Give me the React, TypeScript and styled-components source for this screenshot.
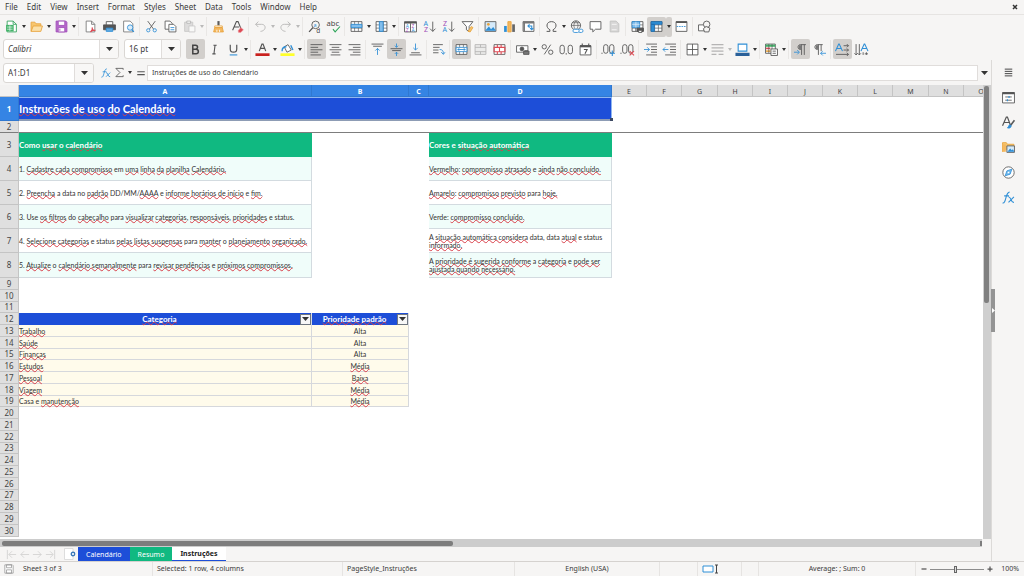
import React from "react";
import styled, { createGlobalStyle, css } from "styled-components";

const Global = createGlobalStyle`
  * { box-sizing: border-box; }
  html, body, #root { height: 100%; }
  body { margin: 0; background: #f6f5f4; color: #3b3b3b; font: 8px/12px "Noto Sans", "Open Sans", sans-serif; overflow: hidden; }
  button, input { font: inherit; color: inherit; margin: 0; padding: 0; border: 0; background: none; border-radius: 0; outline: 0; }
`;

/* ---------- shell ---------- */

const Shell = styled.div`
  display: flex;
  flex-direction: column;
  height: 100%;
  min-height: 320px;
`;

const MenuBar = styled.nav`
  display: flex;
  flex: none;
  height: 15px;
  padding-right: 6px;
  border-bottom: 1px solid #e6e4e2;
`;

const MenuButton = styled.button`
  padding: 0 4px 0 5px;
  line-height: 14px;
  white-space: nowrap;
`;

const CloseButton = styled.button`
  margin-left: auto;
  width: 6px;
  display: grid;
  place-items: center;
`;

const ToolBar = styled.div<{ $tall?: boolean }>`
  display: flex;
  flex: none;
  align-items: center;
  height: ${(p) => (p.$tall ? 23 : 22)}px;
  padding-left: ${(p) => (p.$tall ? 2 : 3)}px;
  overflow: hidden;
`;

const pressed = css`
  background: #d2cfcc;
  border-radius: 2px;
`;

const Tool = styled.button<{ $on?: boolean; $dim?: boolean }>`
  display: grid;
  place-items: center;
  flex: none;
  width: 19px;
  height: 20px;
  ${(p) => p.$on && pressed}
  svg { opacity: ${(p) => (p.$dim ? 0.4 : 1)}; }
`;

const DropButton = styled.button<{ $on?: boolean; $dim?: boolean }>`
  display: grid;
  place-items: center;
  flex: none;
  width: 6px;
  height: 20px;
  ${(p) => p.$on && pressed}
  svg { opacity: ${(p) => (p.$dim ? 0.3 : 1)}; }
`;

const Divider = styled.span`
  flex: none;
  width: 1px;
  height: 19px;
  margin: 0 2px 0 1px;
  background: #e9e7e5;
`;

const Combo = styled.div<{ $width: number }>`
  display: flex;
  flex: none;
  width: ${(p) => p.$width}px;
  height: 20px;
  margin-right: 5px;
  border: 1px solid #dad7d4;
  border-radius: 3px;
  background: #fff;
  overflow: hidden;
`;

const ComboInput = styled.input<{ $italic?: boolean }>`
  flex: 1;
  min-width: 0;
  padding-left: 4px;
  font-style: ${(p) => (p.$italic ? "italic" : "normal")};
`;

const ComboButton = styled.button`
  display: grid;
  place-items: center;
  width: 19px;
  border-left: 1px solid #e0dddb;
  background: #f8f7f6;
`;

const Main = styled.div`
  display: flex;
  flex: 1;
  min-height: 0;
`;

const Work = styled.main`
  display: flex;
  flex-direction: column;
  flex: 1;
  min-width: 0;
`;

const FormulaBar = styled.div`
  display: flex;
  flex: none;
  align-items: center;
  height: 25px;
  padding-left: 3px;
`;

const SmallTool = styled.button<{ $width: number }>`
  display: grid;
  place-items: center;
  flex: none;
  width: ${(p) => p.$width}px;
  height: 18px;
`;

const FormulaInput = styled.input`
  flex: 1;
  min-width: 0;
  height: 16px;
  padding-left: 4px;
  border: 1px solid #e0dddb;
  background: #fff;
  font-size: 7px;
`;

/* ---------- sheet ---------- */

const SheetArea = styled.div`
  display: flex;
  flex: 1;
  min-height: 0;
`;

const SheetView = styled.div`
  flex: 1;
  min-width: 0;
  overflow: hidden;
  background: #fff;
`;

const Grid = styled.table`
  table-layout: fixed;
  width: 999px;
  border-collapse: separate;
  border-spacing: 0;
  font-size: 7px;
  line-height: 8px;
`;

const Col = styled.col<{ $width: number }>`
  width: ${(p) => p.$width}px;
`;

const Head = styled.th<{ $on?: boolean }>`
  height: ${(p) => (p.scope === "col" ? "12px" : "auto")};
  padding: ${(p) => (p.scope === "col" ? "2px 0 0" : "0")};
  font-size: ${(p) => (p.scope === "col" ? 7 : 8)}px;
  font-weight: ${(p) => (p.$on ? 700 : 400)};
  text-align: center;
  color: ${(p) => (p.$on ? "#fff" : "#444")};
  background: ${(p) => (p.$on ? "#3584e4" : "#dfdfdf")};
  border: 0 solid ${(p) => (p.$on ? "#3078d0" : "#c4c4c4")};
  border-width: 0 1px 1px 0;
`;

const Corner = styled.td`
  background: #f3f2f1;
  border-right: 1px solid #c4c4c4;
  border-bottom: 1px solid #c4c4c4;
`;

const Row = styled.tr<{ $height: number; $frozen?: boolean }>`
  height: ${(p) => p.$height}px;
  ${(p) => p.$frozen && css`
    & > * { border-bottom: 1px solid #7d7d7d; }
  `}
`;

type Kind = "blank" | "title" | "section" | "mint" | "plain" | "listHead" | "list";

const kinds = {
  blank: css``,
  title: css`
    position: relative;
    background: #1d4ed8;
    color: #fff;
    font-size: 11px;
    font-weight: 700;
    border: 1px solid #8fb6f0;
    border-left: 0;
    border-bottom: 2px solid #8d9cb5;
    &::after {
      content: "";
      position: absolute;
      right: -2px;
      bottom: -2px;
      width: 3px;
      height: 3px;
      background: #3d4a63;
    }
  `,
  section: css`
    background: #10b981;
    color: #fff;
    font-size: 8px;
    font-weight: 700;
  `,
  mint: css`
    background: #f0fdfa;
    border-right: 1px solid #d3dbe0;
    border-bottom: 1px solid #d3dbe0;
  `,
  plain: css`
    border-right: 1px solid #d3dbe0;
    border-bottom: 1px solid #d3dbe0;
  `,
  listHead: css`
    background: #1d4ed8;
    color: #fff;
    font-size: 8px;
    font-weight: 700;
    border-right: 1px solid #d9dce2;
  `,
  list: css`
    background: #fffbeb;
    border-right: 1px solid #d6d8dc;
    border-bottom: 1px solid #d6d8dc;
  `,
};

const Cell = styled.td<{ $kind: Kind; $center?: boolean }>`
  padding: 0;
  text-align: ${(p) => (p.$center ? "center" : "left")};
  vertical-align: middle;
  white-space: ${(p) => (p.$kind === "mint" || p.$kind === "plain" ? "normal" : "nowrap")};
  color: #333;
  font-family: Lato, Carlito, sans-serif;
  ${(p) => kinds[p.$kind]}
`;

const Misspelt = styled.span`
  text-decoration: underline wavy #d8404a 1px;
  text-underline-offset: -1px;
  text-decoration-skip-ink: none;
`;

const HeadCellInner = styled.div`
  display: flex;
  align-items: center;
  justify-content: space-between;
  span:first-child { flex: 1; }
`;

const FilterButton = styled.button`
  display: grid;
  place-items: center;
  width: 11px;
  height: 11px;
  border: 1px solid #6f7680;
  background: #f7f7f7;
`;

const VScroll = styled.div`
  flex: none;
  width: 8px;
  padding: 1px 2px 0 1px;
  background: #cfcfcf;
`;

const VThumb = styled.div`
  height: 48%;
  border-radius: 2px;
  background: #808080;
`;

const HScroll = styled.div`
  display: flex;
  justify-content: space-between;
  flex: none;
  height: 8px;
  margin-right: 9px;
  padding: 2px 0 1px 2px;
  background: #cccccc;
`;

const HThumb = styled.div`
  width: 46%;
  border-radius: 2px;
  background: #7d7d7d;
`;

const HEnd = styled.div`
  width: 2px;
  background: #7d7d7d;
`;

/* ---------- sheet tabs ---------- */

const TabBar = styled.div`
  display: flex;
  flex: none;
  align-items: stretch;
  height: 14px;
  padding: 0 0 0 5px;
`;

const TabNav = styled.button`
  display: grid;
  place-items: center;
  width: 13px;
`;

const NavFade = styled.span`
  opacity: 0.25;
`;

const AddSheet = styled.button`
  display: grid;
  place-items: center;
  width: 14px;
  margin: 0 1px 0 6px;
`;

const SheetTab = styled.button<{ $color: string; $active?: boolean }>`
  padding: 0 8px;
  line-height: 13px;
  font-size: 7px;
  color: ${(p) => (p.$active ? "#222" : "#fff")};
  font-weight: ${(p) => (p.$active ? 700 : 400)};
  background: ${(p) => (p.$active ? "#fff" : p.$color)};
  border-bottom: ${(p) => (p.$active ? `1px solid ${p.$color}` : "0")};
`;

/* ---------- sidebar ---------- */

const SideBar = styled.aside`
  position: relative;
  display: flex;
  flex-direction: column;
  align-items: center;
  flex: none;
  width: 33px;
  border-left: 1px solid #dcdad8;
`;

const SideButton = styled.button`
  display: grid;
  place-items: center;
  flex: none;
  width: 25px;
  height: 25px;
`;

const Splitter = styled.button`
  position: absolute;
  left: -1px;
  top: 229px;
  display: grid;
  place-items: center;
  width: 4px;
  height: 43px;
  background: #949494;
`;

/* ---------- status bar ---------- */

const StatusBar = styled.footer`
  display: grid;
  grid-template-columns: 19px 133fr 190fr 172fr 145fr 38fr 44fr 17fr 157fr 109px;
  flex: none;
  height: 15px;
  border-top: 1px solid #d5d2cf;
  font-size: 7px;
`;

const StatusCell = styled.div<{ $center?: boolean; $line?: boolean }>`
  display: flex;
  align-items: center;
  justify-content: ${(p) => (p.$center ? "center" : "flex-start")};
  padding-left: ${(p) => (p.$center ? 0 : 4)}px;
  border-left: ${(p) => (p.$line === false ? "0" : "1px solid #e6e4e2")};
  white-space: nowrap;
`;

const ZoomButton = styled.button`
  display: grid;
  place-items: center;
  width: 8px;
  height: 12px;
`;

const ZoomSlider = styled.input`
  appearance: none;
  width: 54px;
  height: 10px;
  margin: 0 2px;
  background: linear-gradient(#8c8c8c, #8c8c8c) center / 100% 1px no-repeat;
  &::-webkit-slider-thumb {
    appearance: none;
    width: 3px;
    height: 7px;
    border: 1px solid #666;
    background: #ddd;
  }
`;

const ZoomValue = styled.span`
  margin-left: auto;
  padding-right: 5px;
`;

/* ---------- icons ---------- */

const Svg = styled.svg<{ $size: number }>`
  display: block;
  width: ${(p) => p.$size}px;
  height: ${(p) => p.$size}px;
  fill: none;
  stroke: #555;
  stroke-width: 1.6;
  overflow: visible;
  text { stroke: none; fill: #4a4a4a; font-family: "Noto Sans", sans-serif; }
`;

const Icon = ({ size = 13, children }: { size?: number; children: React.ReactNode }) => (
  <Svg viewBox="0 0 24 24" $size={size} aria-hidden="true">{children}</Svg>
);

const Caret = ({ wide }: { wide?: boolean }) => (
  <svg width={wide ? 7 : 4} height={wide ? 4 : 3} viewBox="0 0 8 5" preserveAspectRatio="none" aria-hidden="true">
    <path d="M0 0h8L4 5z" fill="#333" />
  </svg>
);

const BLUE = "#2f8fd6";
const FILL_BLUE = "#83beec";
const GREY = "#5a5a5a";
const ORANGE = "#e8a33d";
const RED = "#dd4b55";
const PURPLE = "#a150b8";

const tableGrid = <><path d="M2 3h20v18H2z" fill="#fff" /><path d="M2 9h20M2 15h20M8.500 3v18M15.500 3v18" strokeWidth="1.200" /></>;
const lines = (rows: [number, number, number][]) => rows.map(([y, a, b]) => <path key={y} d={`M${a} ${y}H${b}`} />);

const art: Record<string, React.ReactNode> = {
  new: <><path d="M4 2h11l6 6v14H4z" fill="#fff" stroke="#33a15b" /><path d="M15 2v6h6" stroke="#33a15b" /><path d="M2 9h14v12H2z" fill="#43b36a" stroke="none" /><path d="M4 13h10M4 17h10M9 10v10" stroke="#fff" strokeWidth="1.200" /></>,
  open: <><path d="M2 21V4h7l2 3h9v4" fill="#f7c66f" stroke={ORANGE} /><path d="M2 21 6 11h17l-3 10z" fill="#fbe0a9" stroke={ORANGE} /></>,
  save: <><path d="M2 2h18l2 2v18H2z" fill="#b668cb" stroke={PURPLE} /><path d="M6 2h12v8H6z" fill="#fff" stroke={PURPLE} /><path d="M6 14h12v8H6z" fill="#fff" stroke={PURPLE} /><path d="M9 16v4" stroke={PURPLE} /></>,
  pdf: <><path d="M4 2h10l6 6v14H4z" fill="#fff" stroke="#777" /><path d="M14 2v6h6" stroke="#777" /><path d="M12 22c3-3 4-6 3-8 0 4 3 6 6 5-4 0-7 1-9 3z" stroke={RED} fill={RED} strokeWidth="2" /></>,
  print: <><path d="M6 9V3h12v6" fill="#fff" /><path d="M1 9h22v9H1z" fill="#555" /><path d="M6 15h12v6H6z" fill="#5fa8df" stroke={BLUE} /></>,
  preview: <><path d="M3 2h12l5 5v15H3z" fill="#fff" stroke="#777" /><circle cx="15" cy="14" r="5" fill="#d9ecfa" stroke={BLUE} /><path d="m18 18 4 4" stroke={BLUE} strokeWidth="2.200" /></>,
  cut: <><path d="M5 2 16 17M19 2 8 17" stroke={GREY} /><circle cx="6" cy="19" r="3" stroke={BLUE} /><circle cx="18" cy="19" r="3" stroke={BLUE} /></>,
  copy: <><path d="M2 2h9l4 4v11H2z" fill="#fff" stroke={GREY} /><path d="M9 8h9l4 4v10H9z" fill="#fff" stroke={GREY} /><path d="M12 14h7M12 18h7" stroke={BLUE} /></>,
  paste: <><path d="M3 4h15v17H3z" fill="#b9b9b9" stroke="#888" /><path d="M7 2h7v4H7z" fill="#fff" /><path d="M11 11h11v11H11z" fill="#fff" stroke="#888" /></>,
  clone: <><path d="M12 2v8" strokeWidth="4" stroke={GREY} /><path d="M5 11h14v3H5z" fill="#fff" stroke={ORANGE} /><path d="M5 14h14l2 8H3z" fill="#f4b860" stroke={ORANGE} /><path d="M9 22v-4M14 22v-4" stroke="#fff" /></>,
  clear: <><path d="M3 19 10 3h3l5 12M6 13h9" strokeWidth="2" /><path d="m13 20 5-6 5 4-5 5h-4z" fill={RED} stroke="#f3a0a5" strokeWidth="1" /></>,
  undo: <path d="M8 3 3 8l5 5M3 8h11c9 0 9 12-2 13" />,
  redo: <path d="m16 3 5 5-5 5M21 8H10C1 8 1 20 12 21" />,
  find: <><circle cx="14" cy="9" r="7" /><path d="m9 14-7 8" strokeWidth="2.400" /><text x="10" y="13" fontSize="10" style={{ fill: BLUE }}>a</text><text x="15" y="24" fontSize="12">d</text></>,
  spell: <><text x="-1" y="11" fontSize="14">abc</text><path d="m11 17 4 5 9-10" stroke="#2fa65a" strokeWidth="2" /></>,
  rows: <>{tableGrid}<path d="M2 8h20v6H2z" fill={FILL_BLUE} stroke={BLUE} /></>,
  cols: <>{tableGrid}<path d="M8 3h7v18H8z" fill={FILL_BLUE} stroke={BLUE} /></>,
  sort: <><path d="M1 3h22v19H1z" fill="#fff" /><path d="M1 5h22" strokeWidth="3" /><path d="M12 6v16" /><text x="3" y="14" fontSize="9" style={{ fill: BLUE }}>A</text><text x="3" y="22" fontSize="9" style={{ fill: PURPLE }}>Z</text><text x="14" y="14" fontSize="9" style={{ fill: PURPLE }}>Z</text><text x="14" y="22" fontSize="9" style={{ fill: BLUE }}>A</text></>,
  az: <><text x="1" y="11" fontSize="13" style={{ fill: BLUE }}>A</text><text x="2" y="23" fontSize="13" style={{ fill: PURPLE }}>Z</text><path d="M18 3v18M13 16l5 5 5-5" /></>,
  za: <><text x="2" y="11" fontSize="13" style={{ fill: PURPLE }}>Z</text><text x="1" y="23" fontSize="13" style={{ fill: BLUE }}>A</text><path d="M18 3v18M13 16l5 5 5-5" /></>,
  filter: <><path d="M2 3h20l-7 9v9l-5-3v-6z" fill="#fff" /><path d="m13 21 6-9 3 2-5 8z" fill="#f7c66f" stroke={ORANGE} /></>,
  image: <><path d="M2 3h20v18H2z" fill="#d5eafa" stroke={GREY} /><circle cx="8" cy="8" r="2.500" fill={ORANGE} stroke="none" /><path d="m2 20 7-8 4 5 4-4 5 7z" fill={BLUE} stroke="none" /></>,
  chart: <><path d="M2 11h5v11H2z" fill={BLUE} stroke="none" /><path d="M9 3h6v19H9z" fill="#f4b860" stroke={ORANGE} /><path d="M17 8h5v14h-5z" fill="#666" stroke="none" /></>,
  pivot: <><path d="M2 3h20v18H2z" fill="#fff" /><path d="M2 5h20M4 3v18" strokeWidth="3" stroke="#777" /><path d="M12 11h6v7M14 8l-3 3 3 3M15 15l3 3 3-3" stroke={BLUE} strokeWidth="2" /></>,
  omega: <path d="M3 21h6v-3C1 14 2 3 12 3s11 11 3 15v3h6" strokeWidth="1.800" />,
  link: <><circle cx="11" cy="10" r="8.500" /><path d="M2 10h18M11 2c-5 4-5 12 0 16M11 2c5 4 5 12 0 16M4 5h14" strokeWidth="1.200" /><path d="M8 17h6a3 3 0 0 1 0 6H9a3 3 0 0 1-1-6zM17 17h4a3 3 0 0 1 0 6h-4" stroke={BLUE} fill="#fff" /></>,
  comment: <path d="M2 3h20v14H12l-5 5v-5H2z" fill="#fff" />,
  header: <><path d="M4 2h11l5 5v15H4z" fill="#aaa" stroke="#777" /><path d="M7 8h9M7 18h9" stroke="#fff" /></>,
  printArea: <>{tableGrid}<path d="M2 3h14v11H2z" fill={FILL_BLUE} stroke={BLUE} /><path d="M9 3v11M2 8h14" stroke="#fff" strokeWidth="1" /><path d="M11 15h12v6H11z" fill="#555" /><path d="M14 19h6v4h-6z" fill="#fff" /></>,
  freeze: <>{tableGrid}<path d="M2 3h20v5H2zM2 8h6v13H2z" fill={BLUE} stroke="#1f6fb2" /></>,
  split: <><path d="M2 3h20v18H2z" fill="#fff" /><path d="M2 4h20" strokeWidth="3" /><path d="M3 12h18" stroke={BLUE} strokeDasharray="3 1.500" /></>,
  shapes: <><path d="M1 9h12v11H1z" fill="#fff" /><circle cx="16" cy="8" r="6" fill="#f6f5f4" /><path d="m15 12 7 3-2 7h-8l-2-6z" fill="#f6f5f4" /></>,

  bold: <path d="M7 4h5a3.700 3.700 0 0 1 0 7.500H7zM7 11.500h6a4 4 0 0 1 0 8.500H7z" strokeWidth="2.800" stroke="#444" />,
  italic: <path d="M10 4h6M8 20h6M13 4l-2 16" strokeWidth="2" />,
  underline: <><path d="M6 3v8c0 8 12 8 12 0V3" strokeWidth="2.200" /><path d="M5 22h14" stroke={BLUE} strokeWidth="2" /></>,
  fontColor: <><path d="M6 15 11 2h2l5 13M8 10h8" strokeWidth="2.200" /><path d="M-1 19h26v5H-1z" fill="#c9211e" stroke="none" /></>,
  highlight: <><path d="M6 7 13 3l6 10-8 4z" fill="#fff" stroke={GREY} /><path d="M2 15c0-6 3-8 8-8M18 4l4 9" stroke={BLUE} strokeWidth="2.500" /><path d="M-1 19h26v5H-1z" fill="#ffff2a" stroke="none" /></>,
  left: lines([[3, 1, 23], [8, 1, 15], [12.5, 1, 23], [17, 1, 15], [22, 1, 20]]),
  center: lines([[3, 1, 23], [8, 5, 19], [12.5, 1, 23], [17, 5, 19], [22, 3, 21]]),
  right: lines([[3, 1, 23], [8, 9, 23], [12.5, 1, 23], [17, 9, 23], [22, 4, 23]]),
  top: <>{lines([[2, 1, 23], [6, 4, 20]])}<path d="M12 22V10M8 14l4-4 4 4" stroke={BLUE} /></>,
  middle: <>{lines([[10.500, 1, 23], [14, 4, 20]])}<path d="M12 1v7M9 5l3 3 3-3M12 24v-7M9 20l3-3 3 3" stroke={BLUE} /></>,
  bottom: <>{lines([[18, 4, 20], [22, 1, 23]])}<path d="M12 1v12M8 9l4 4 4-4" stroke={BLUE} /></>,
  wrap: <>{lines([[3, 2, 20], [8, 2, 14], [13, 2, 12], [18, 2, 12]])}<path d="M14 12c5 0 7 2 7 8M17 17l4 4 3-4" stroke={BLUE} /></>,
  mergeCenter: <>{tableGrid}<path d="M2 8h20v8H2z" fill="#fff" stroke={BLUE} /><path d="M5 12h14M8 10l-3 2 3 2M16 10l3 2-3 2" stroke={BLUE} /></>,
  merge: <><path d="M2 3h20v18H2zM2 8h20M2 16h20M12 3v5M12 16v5" fill="#ddd" /></>,
  unmerge: <><path d="M2 3h20v18H2z" fill="#fff" stroke={GREY} /><path d="M2 8h20v8H2zM8 3v5M15 3v5M8 16v5M15 16v5M12 8v8" stroke={RED} strokeWidth="2" /></>,
  currency: <><path d="M1 5h21v12H1z" fill="#fff" stroke={GREY} /><circle cx="11" cy="11" r="3.500" fill="#555" /><ellipse cx="19" cy="16" rx="5" ry="2" fill="#555" /><path d="M14 16v5h10v-5" fill="#777" /></>,
  percent: <><circle cx="6" cy="7" r="4" /><circle cx="18" cy="17" r="4" /><path d="M18 3 6 21" /></>,
  number: <><rect x="0" y="4" width="8" height="16" rx="4" /><rect x="15" y="4" width="8" height="16" rx="4" /><path d="M10.500 20h2" strokeWidth="2" /></>,
  date: <><path d="M2 5h20v17H2z" fill="#fff" /><path d="M2 6h20" strokeWidth="4" /><path d="M6 1v4M18 1v4M9 12h6l-4 8" strokeWidth="2" /></>,
  addDec: <><rect x="3" y="3" width="8" height="16" rx="4" /><rect x="14" y="3" width="8" height="16" rx="4" /><path d="M-1 19h2" strokeWidth="2" /><path d="M19 14v10M14 19h10" stroke={BLUE} strokeWidth="2" /></>,
  delDec: <><rect x="3" y="3" width="8" height="16" rx="4" /><rect x="14" y="3" width="8" height="16" rx="4" /><path d="M-1 19h2" strokeWidth="2" /><path d="m16 15 8 8M24 15l-8 8" stroke={RED} strokeWidth="2" /></>,
  indent: <>{lines([[2, 4, 24], [7, 13, 24], [12, 13, 24], [17, 13, 24], [22, 4, 24]])}<path d="M0 12h10M6 8l4 4-4 4" stroke={BLUE} /></>,
  outdent: <>{lines([[2, 4, 24], [7, 13, 24], [12, 13, 24], [17, 13, 24], [22, 4, 24]])}<path d="M0 12h10M4 8l-4 4 4 4" stroke={BLUE} /></>,
  borders: <path d="M2 2h20v20H2zM12 2v20M2 12h20" fill="#fff" />,
  lineStyle: <path d="M1 3h22M1 9h22M1 15h22M1 21h9M14 21h9" strokeWidth="2.400" />,
  borderColor: <><path d="M4 2h16v13H4z" fill="#fff" stroke={BLUE} strokeWidth="2" /><path d="M-1 18h26v6H-1z" fill="#2a6099" stroke="none" /></>,
  condition: <><path d="M1 2h18v17H1z" fill="#fff" /><path d="M1 5h18" stroke="#43b36a" strokeWidth="4" /><path d="M2 10h8" stroke={RED} strokeWidth="3" /><path d="M2 15h8" stroke={ORANGE} strokeWidth="3" /><path d="M7 2v17M13 2v17" strokeWidth="1.200" /><path d="M11 11h12v12H11z" fill="#fff" /><path d="M14 15h6M14 19h6" /></>,
  ltr: <><path d="M22 3H12c-6 0-6 9 0 9h1M14 3v19M19 3v19" /><path d="M9 4h5v7H9z" fill="#777" stroke="none" /><path d="M0 17h9M6 13l4 4-4 4" stroke={BLUE} /></>,
  rtl: <><path d="M18 3H8C2 3 2 12 8 12h1M10 3v19M15 3v12" /><path d="M5 4h5v7H5z" fill="#777" stroke="none" /><path d="M14 19h10M18 15l-4 4 4 4" stroke={BLUE} /></>,
  textH: <><path d="M-1 15 5 2h1l6 13M2 10h8" stroke={BLUE} strokeWidth="2" /><path d="M14 5h9M20 2l3 3-3 3M14 13h9M20 10l3 3-3 3M0 21h23M20 18l3 3-3 3" /></>,
  textV: <><path d="M11 15 17 2h1l6 13M13 10h9" stroke={BLUE} strokeWidth="2" /><path d="M2 2v20M-1 19l3 3 3-3M8 2v20M5 19l3 3 3-3M15 17v5M21 17v5M18 20h6" /></>,

  menu: <path d="M2 3h20M2 9h20M2 15h20M2 21h20" strokeWidth="2.600" stroke="#444" />,
  properties: <><path d="M1 3h22v19H1z" fill="#fff" /><path d="M1 4h22" strokeWidth="4" /><path d="M6 11h12M6 17h12" stroke={GREY} /><path d="M13 9v4M10 15v4" stroke={BLUE} strokeWidth="2" /></>,
  styles: <><path d="M1 18 8 2h2l6 16M4 12h10" strokeWidth="2.200" /><path d="m23 8-7 9" stroke={GREY} strokeWidth="3" /><path d="M10 22c3 1 7 0 7-4l-2-2c-3 0-2 4-5 6z" fill={BLUE} stroke={BLUE} /></>,
  gallery: <><path d="M1 20V3h7l2 3h12v4" fill="#f7c66f" stroke={ORANGE} /><path d="M1 6h6v14H1z" fill="#f4b860" stroke="none" /><path d="M9 9h14v12H9z" fill="#d5eafa" stroke={GREY} /><path d="m10 20 5-6 3 3 2-2 3 5z" fill={BLUE} stroke="none" /></>,
  navigator: <><circle cx="12" cy="12" r="10.500" fill="#fff" stroke={GREY} /><path d="m18 6-3 9-9 3 3-9z" fill="#7fc0ee" stroke={BLUE} /><circle cx="12" cy="12" r="1.500" fill="#fff" stroke="none" /></>,
  fx: <path d="M1 22c7 2 5-20 13-20M4 9h9M12 11c5-1 4 11 10 10M22 11l-10 10" stroke={BLUE} strokeWidth="2" />,
  sigma: <path d="M20 6V3H4l9 9-9 9h16v-3" strokeWidth="1.800" />,
  equals: <path d="M3 9h18M3 16h18" strokeWidth="2.800" />,
  close: <path d="m4 4 16 16M20 4 4 20" strokeWidth="6" stroke="#333" />,
  first: <path d="M3 2v20M22 12H7M13 5l-7 7 7 7" />,
  prev: <path d="M22 12H4M11 5l-7 7 7 7" />,
  next: <path d="M2 12h18M13 5l7 7-7 7" />,
  last: <path d="M21 2v20M2 12h15M11 5l7 7-7 7" />,
  addSheet: <><path d="M1 1h17v22H1z" fill="#fff" stroke="#d5d5d5" /><circle cx="18" cy="12" r="3.500" fill="#fff" stroke="#3a78b8" strokeWidth="2.600" /></>,
  disk: <><path d="M2 2h18l2 2v18H2z" fill="#fff" stroke="#888" /><path d="M6 2h12v7H6zM6 14h12v8H6z" stroke="#888" /></>,
  minus: <path d="M2 12h20" strokeWidth="5" />,
  plus: <path d="M2 12h20M12 2v20" strokeWidth="5" />,
};

/* ---------- toolbar data ---------- */

type ToolSpec = { icon: string; label: string; drop?: boolean; on?: boolean; dim?: boolean } | "|";

const standard: ToolSpec[] = [
  { icon: "new", label: "New", drop: true }, { icon: "open", label: "Open", drop: true }, { icon: "save", label: "Save", drop: true }, "|",
  { icon: "pdf", label: "Export as PDF" }, { icon: "print", label: "Print" }, { icon: "preview", label: "Print Preview" }, "|",
  { icon: "cut", label: "Cut" }, { icon: "copy", label: "Copy" }, { icon: "paste", label: "Paste", drop: true, dim: true }, "|",
  { icon: "clone", label: "Clone Formatting" }, { icon: "clear", label: "Clear Formatting" }, "|",
  { icon: "undo", label: "Undo", drop: true, dim: true }, { icon: "redo", label: "Redo", drop: true, dim: true }, "|",
  { icon: "find", label: "Find and Replace" }, { icon: "spell", label: "Spelling" }, "|",
  { icon: "rows", label: "Row", drop: true }, { icon: "cols", label: "Column", drop: true }, "|",
  { icon: "sort", label: "Sort" }, { icon: "az", label: "Sort Ascending" }, { icon: "za", label: "Sort Descending" }, { icon: "filter", label: "AutoFilter" }, "|",
  { icon: "image", label: "Insert Image" }, { icon: "chart", label: "Insert Chart" }, { icon: "pivot", label: "Insert Pivot Table" }, "|",
  { icon: "omega", label: "Special Character", drop: true }, { icon: "link", label: "Insert Hyperlink" }, { icon: "comment", label: "Insert Comment" }, { icon: "header", label: "Headers and Footers", dim: true }, "|",
  { icon: "printArea", label: "Define Print Area" }, { icon: "freeze", label: "Freeze Rows and Columns", drop: true, on: true }, { icon: "split", label: "Split Window" }, "|",
  { icon: "shapes", label: "Show Draw Functions" },
];

const formatting: ToolSpec[] = [
  { icon: "bold", label: "Bold", on: true }, { icon: "italic", label: "Italic" }, { icon: "underline", label: "Underline", drop: true }, "|",
  { icon: "fontColor", label: "Font Color", drop: true }, { icon: "highlight", label: "Background Color", drop: true }, "|",
  { icon: "left", label: "Align Left", on: true }, { icon: "center", label: "Center Horizontally" }, { icon: "right", label: "Align Right" }, "|",
  { icon: "top", label: "Align Top" }, { icon: "middle", label: "Center Vertically", on: true }, { icon: "bottom", label: "Align Bottom" }, "|",
  { icon: "wrap", label: "Wrap Text" }, "|",
  { icon: "mergeCenter", label: "Merge and Center", on: true }, { icon: "merge", label: "Merge Cells", dim: true }, { icon: "unmerge", label: "Unmerge Cells" }, "|",
  { icon: "currency", label: "Format as Currency", drop: true }, { icon: "percent", label: "Format as Percent" }, { icon: "number", label: "Format as Number" }, { icon: "date", label: "Format as Date" }, "|",
  { icon: "addDec", label: "Add Decimal Place" }, { icon: "delDec", label: "Delete Decimal Place" }, "|",
  { icon: "indent", label: "Increase Indent" }, { icon: "outdent", label: "Decrease Indent" }, "|",
  { icon: "borders", label: "Borders", drop: true }, { icon: "lineStyle", label: "Border Style", drop: true, dim: true }, { icon: "borderColor", label: "Border Color", drop: true }, "|",
  { icon: "condition", label: "Conditional Formatting", drop: true }, "|",
  { icon: "ltr", label: "Left-To-Right", on: true }, { icon: "rtl", label: "Right-To-Left" }, "|",
  { icon: "textH", label: "Text direction from left to right", on: true }, { icon: "textV", label: "Text direction from top to bottom" },
];

const Tools = ({ items }: { items: ToolSpec[] }) => (
  <>
    {items.map((t, i) =>
      t === "|" ? <Divider key={i} /> : (
        <React.Fragment key={i}>
          <Tool aria-label={t.label} aria-pressed={t.on} $on={t.on} $dim={t.dim}><Icon>{art[t.icon]}</Icon></Tool>
          {t.drop && <DropButton aria-label={`${t.label} options`} $on={t.on} $dim={t.dim}><Caret /></DropButton>}
        </React.Fragment>
      ),
    )}
  </>
);

/* ---------- sheet data ---------- */

const columns: [string, number][] = [
  ["A", 293], ["B", 97], ["C", 20], ["D", 183],
  ["E", 35], ["F", 35], ["G", 36], ["H", 35], ["I", 35], ["J", 35], ["K", 35], ["L", 35], ["M", 36], ["N", 35], ["O", 35],
];

// Words between square brackets are flagged by the spell checker.
const guide: Record<number, [string, string]> = {
  3: ["Como [usar] o [calendário]", "Cores e [situação automática]"],
  4: ["1. [Cadastre cada compromisso] em [uma] [linha] [da] [planilha] [Calendário.]", "[Vermelho]: [compromisso] [atrasado] e [ainda] [não concluído.]"],
  5: ["2. [Preencha] a data no [padrão] DD/MM/[AAAA] e [informe horários de início] e [fim.]", "[Amarelo]: [compromisso] [previsto] para [hoje.]"],
  6: ["3. Use [os filtros] do [cabeçalho] para [visualizar] [categorias], [responsáveis], [prioridades] e status.", "Verde: [compromisso concluído.]"],
  7: ["4. [Selecione categorias] e status [pelas listas suspensas] para [manter] o [planejamento] [organizado.]", "A [situação automática considera] data, data [atual] e status [informado.]"],
  8: ["5. [Atualize] o [calendário semanalmente] para [revisar pendências] e [próximos compromissos.]", "A [prioridade é sugerida conforme] a [categoria] e [pode ser] [ajustada quando necessário.]"],
};

const categories: Record<number, [string, string]> = {
  13: ["[Trabalho]", "Alta"],
  14: ["[Saúde]", "Alta"],
  15: ["[Finanças]", "Alta"],
  16: ["[Estudos]", "[Média]"],
  17: ["[Pessoal]", "[Baixa]"],
  18: ["[Viagem]", "[Média]"],
  19: ["Casa e [manutenção]", "[Média]"],
};

const Checked = ({ text }: { text: string }) => (
  <>{text.split(/[[\]]/).map((part, i) => (i % 2 ? <Misspelt key={i}>{part}</Misspelt> : part))}</>
);

const rowHeight = (n: number) => {
  if (n === 8) return 25;
  if (n === 1 || (n > 2 && n < 8)) return 24;
  return n > 8 && n % 4 === 3 ? 11 : 12;
};

const FilterHead = ({ text }: { text: string }) => (
  <HeadCellInner>
    <span><Checked text={text} /></span>
    <FilterButton aria-label="Filter"><Caret wide /></FilterButton>
  </HeadCellInner>
);

const rowCells = (n: number) => {
  const rest = columns.length;
  if (n === 1)
    return <><Cell $kind="title" colSpan={4}><Checked text="[Instruções] [de uso] [do] [Calendário]" /></Cell><Cell $kind="blank" colSpan={rest - 4} /></>;
  if (guide[n]) {
    const kind: Kind = n === 3 ? "section" : n % 2 ? "plain" : "mint";
    return (
      <>
        <Cell $kind={kind}><Checked text={guide[n][0]} /></Cell>
        <Cell $kind="blank" colSpan={2} />
        <Cell $kind={kind}><Checked text={guide[n][1]} /></Cell>
        <Cell $kind="blank" colSpan={rest - 4} />
      </>
    );
  }
  if (n === 12)
    return (
      <>
        <Cell $kind="listHead" $center><FilterHead text="[Categoria]" /></Cell>
        <Cell $kind="listHead" $center><FilterHead text="[Prioridade padrão]" /></Cell>
        <Cell $kind="blank" colSpan={rest - 2} />
      </>
    );
  if (categories[n])
    return (
      <>
        <Cell $kind="list"><Checked text={categories[n][0]} /></Cell>
        <Cell $kind="list" $center><Checked text={categories[n][1]} /></Cell>
        <Cell $kind="blank" colSpan={rest - 2} />
      </>
    );
  return <Cell $kind="blank" colSpan={rest} />;
};

const menus = ["File", "Edit", "View", "Insert", "Format", "Styles", "Sheet", "Data", "Tools", "Window", "Help"];
const sidePanels = ["menu", "properties", "styles", "gallery", "navigator", "fx"];

export default function App() {
  return (
    <>
      <Global />
      <Shell>
        <MenuBar aria-label="Main menu">
          {menus.map((m) => <MenuButton key={m}>{m}</MenuButton>)}
          <CloseButton aria-label="Close document"><Icon size={6}>{art.close}</Icon></CloseButton>
        </MenuBar>
        <ToolBar $tall role="toolbar" aria-label="Standard"><Tools items={standard} /></ToolBar>
        <ToolBar role="toolbar" aria-label="Formatting">
          <Combo $width={116}>
            <ComboInput aria-label="Font name" defaultValue="Calibri" $italic />
            <ComboButton aria-label="Font list"><Caret wide /></ComboButton>
          </Combo>
          <Combo $width={57}>
            <ComboInput aria-label="Font size" defaultValue="16 pt" />
            <ComboButton aria-label="Font size list"><Caret wide /></ComboButton>
          </Combo>
          <Tools items={formatting} />
        </ToolBar>
        <Main>
          <Work>
            <FormulaBar>
              <Combo $width={91}>
                <ComboInput aria-label="Name box" defaultValue="A1:D1" />
                <ComboButton aria-label="Named ranges"><Caret wide /></ComboButton>
              </Combo>
              <SmallTool $width={14} aria-label="Function Wizard"><Icon size={10}>{art.fx}</Icon></SmallTool>
              <SmallTool $width={12} aria-label="Select Function"><Icon size={11}>{art.sigma}</Icon></SmallTool>
              <SmallTool $width={9} aria-label="Select Function options"><Caret /></SmallTool>
              <SmallTool $width={13} aria-label="Formula"><Icon size={10}>{art.equals}</Icon></SmallTool>
              <FormulaInput aria-label="Input line" defaultValue="Instruções de uso do Calendário" />
              <SmallTool $width={13} aria-label="Expand formula bar"><Caret wide /></SmallTool>
            </FormulaBar>
            <SheetArea>
              <SheetView>
                <Grid>
                  <colgroup>
                    <Col $width={19} />
                    {columns.map(([name, width]) => <Col key={name} $width={width} />)}
                  </colgroup>
                  <thead>
                    <tr>
                      <Corner />
                      {columns.map(([name], i) => <Head key={name} scope="col" $on={i < 4}>{name}</Head>)}
                    </tr>
                  </thead>
                  <tbody>
                    {Array.from({ length: 30 }, (_, i) => i + 1).map((n) => (
                      <Row key={n} $height={rowHeight(n)} $frozen={n === 2}>
                        <Head scope="row" $on={n === 1}>{n}</Head>
                        {rowCells(n)}
                      </Row>
                    ))}
                  </tbody>
                </Grid>
              </SheetView>
              <VScroll><VThumb /></VScroll>
            </SheetArea>
            <HScroll><HThumb /><HEnd /></HScroll>
            <TabBar role="tablist">
              {["first", "prev", "next", "last"].map((n) => (
                <TabNav key={n} aria-label={`${n} sheet`}><NavFade><Icon size={11}>{art[n]}</Icon></NavFade></TabNav>
              ))}
              <AddSheet aria-label="Add sheet"><Icon size={12}>{art.addSheet}</Icon></AddSheet>
              <SheetTab role="tab" $color="#1d4ed8">Calendário</SheetTab>
              <SheetTab role="tab" $color="#10b981">Resumo</SheetTab>
              <SheetTab role="tab" aria-selected $color="#1d4ed8" $active>Instruções</SheetTab>
            </TabBar>
          </Work>
          <SideBar>
            {sidePanels.map((p) => (
              <SideButton key={p} aria-label={p}><Icon size={p === "menu" ? 9 : 13}>{art[p]}</Icon></SideButton>
            ))}
            <Splitter aria-label="Hide sidebar">
              <svg width="3" height="5" viewBox="0 0 3 5" aria-hidden="true"><path d="M0 0l3 2.500L0 5z" fill="#fff" /></svg>
            </Splitter>
          </SideBar>
        </Main>
        <StatusBar>
          <StatusCell $line={false}><Icon size={10}>{art.disk}</Icon></StatusCell>
          <StatusCell $line={false}>Sheet 3 of 3</StatusCell>
          <StatusCell>Selected: 1 row, 4 columns</StatusCell>
          <StatusCell>PageStyle_Instruções</StatusCell>
          <StatusCell $center>English (USA)</StatusCell>
          <StatusCell />
          <StatusCell>
            <svg width="17" height="10" viewBox="0 0 17 10" fill="none" aria-hidden="true">
              <path d="M1 2h10v6H1z" stroke={BLUE} fill="#fff" />
              <path d="M13 1h3M13 9h3M14.500 1v8" stroke="#444" />
            </svg>
          </StatusCell>
          <StatusCell />
          <StatusCell $center>Average: ; Sum: 0</StatusCell>
          <StatusCell>
            <ZoomButton aria-label="Zoom out"><Icon size={6}>{art.minus}</Icon></ZoomButton>
            <ZoomSlider type="range" aria-label="Zoom" min={0} max={100} defaultValue={48} />
            <ZoomButton aria-label="Zoom in"><Icon size={6}>{art.plus}</Icon></ZoomButton>
            <ZoomValue>100%</ZoomValue>
          </StatusCell>
        </StatusBar>
      </Shell>
    </>
  );
}
